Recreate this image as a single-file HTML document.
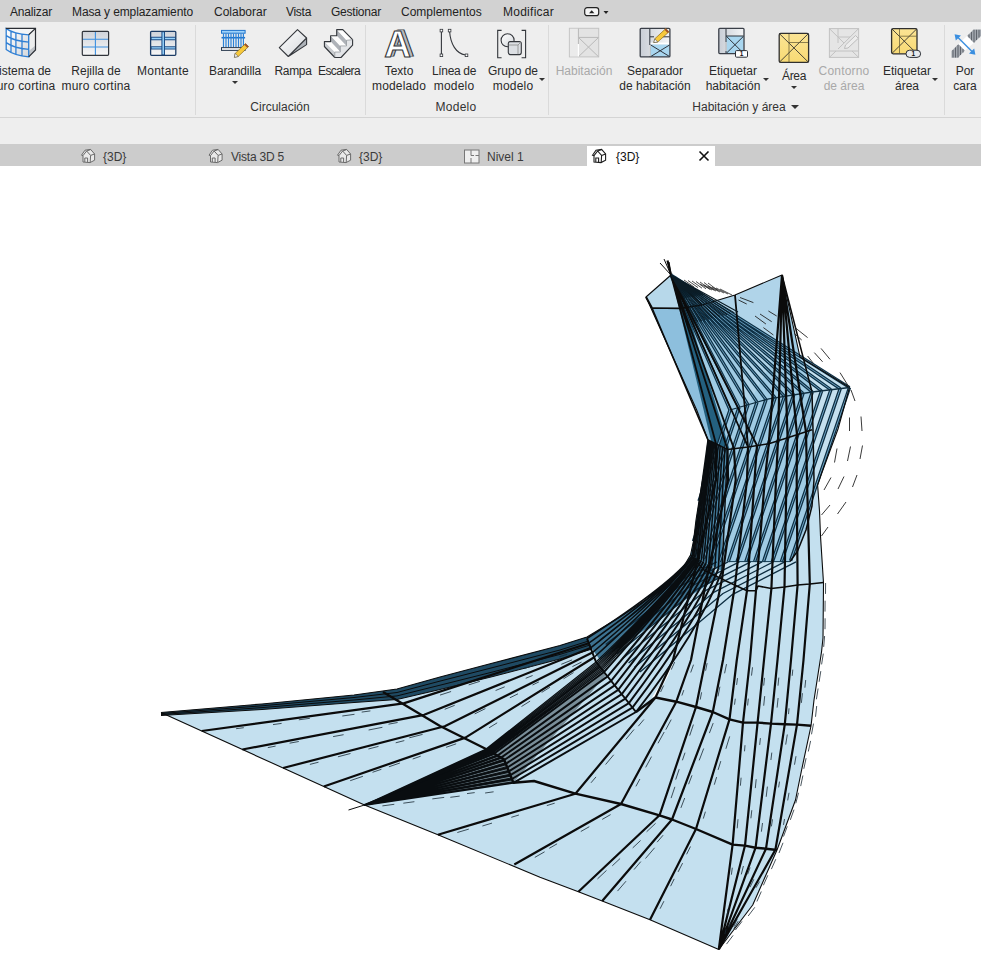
<!DOCTYPE html>
<html lang="es"><head><meta charset="utf-8"><title>Revit</title>
<style>
html,body{margin:0;padding:0;background:#fff;overflow:hidden}
body{width:981px;height:959px;position:relative;font-family:"Liberation Sans",sans-serif;font-size:12px;color:#2b2b2b}
.menubar{position:absolute;left:0;top:0;width:981px;height:22px;background:#d2d2d2}
.menubar>span{position:absolute;top:5px;line-height:15px;white-space:nowrap;color:#222}
.ribbon{position:absolute;left:0;top:22px;width:981px;height:122px;background:#eeeeee}
.rline{position:absolute;left:0;top:117px;width:981px;height:1px;background:#d4d4d4}
.sep{position:absolute;top:25px;width:1px;height:90px;background:#dadada}
.lbl{position:absolute;transform:translateX(-50%);text-align:center;white-space:nowrap;line-height:15px;color:#2a2a2a}
.lbl.dis{color:#a9a9a9}
.ptitle{position:absolute;top:100px;transform:translateX(-50%);white-space:nowrap;line-height:15px;color:#333}
.arr{position:absolute;width:0;height:0;border-left:3px solid transparent;border-right:3px solid transparent;border-top:3px solid #333}
.ico{position:absolute;top:25px;width:36px;height:36px}
.tabbar{position:absolute;left:0;top:144px;width:981px;height:22px;background:#cccccc}
.tab{position:absolute;top:6px;line-height:15px;white-space:nowrap;color:#3a3a3a}
.tabactive{position:absolute;left:587px;top:146px;width:128px;height:20px;background:#fff}
.tico{position:absolute;top:148px;width:16px;height:16px}
.view{position:absolute;left:0;top:166px;width:981px;height:793px;background:#fff}
.model{position:absolute;left:0;top:0}
</style></head><body>
<div class="menubar">
<span style="left:10px"><span style="letter-spacing:-0.17px">Analizar</span></span><span style="left:72px"><span style="letter-spacing:-0.12px">Masa y emplazamiento</span></span><span style="left:214px">Colaborar</span><span style="left:286px"><span style="letter-spacing:-0.29px">Vista</span></span><span style="left:331px"><span style="letter-spacing:-0.23px">Gestionar</span></span><span style="left:401px">Complementos</span><span style="left:503px"><span style="letter-spacing:0.26px">Modificar</span></span>
<svg style="position:absolute;left:584px;top:7px" width="26" height="10" viewBox="0 0 26 10"><rect x="0.7" y="0.7" width="14" height="8" rx="2.5" fill="#f4f4f4" stroke="#222" stroke-width="1.2"/><path d="M5 6.2 L7.7 3.2 L10.4 6.2Z" fill="#222"/><path d="M19.5 4 L24.5 4 L22 7Z" fill="#222"/></svg>
</div>
<div class="ribbon"></div>
<div class="rline"></div>
<div class="sep" style="left:195px"></div><div class="sep" style="left:365px"></div><div class="sep" style="left:548px"></div><div class="sep" style="left:944px"></div>

<div class="lbl" style="left:21px;top:64px">Sistema de<br><span style="letter-spacing:0.19px">muro cortina</span></div>
<div class="lbl" style="left:96px;top:64px">Rejilla de<br><span style="letter-spacing:0.19px">muro cortina</span></div>
<div class="lbl" style="left:163px;top:64px"><span style="letter-spacing:0.24px">Montante</span></div>
<div class="lbl" style="left:235px;top:64px"><span style="letter-spacing:-0.14px">Barandilla</span></div><div class="arr" style="left:232px;top:81px"></div>
<div class="lbl" style="left:293px;top:64px"><span style="letter-spacing:-0.34px">Rampa</span></div>
<div class="lbl" style="left:339px;top:64px"><span style="letter-spacing:-0.59px">Escalera</span></div>
<div class="ptitle" style="left:280px">Circulación</div>
<div class="lbl" style="left:399px;top:64px">Texto<br><span style="letter-spacing:0.16px">modelado</span></div>
<div class="lbl" style="left:454px;top:64px"><span style="letter-spacing:-0.34px">Línea de</span><br><span style="letter-spacing:0.2px">modelo</span></div>
<div class="lbl" style="left:513px;top:64px">Grupo de<br><span style="letter-spacing:0.2px">modelo</span></div><div class="arr" style="left:539px;top:78px"></div>
<div class="ptitle" style="left:456px"><span style="letter-spacing:0.27px">Modelo</span></div>
<div class="lbl dis" style="left:584px;top:64px">Habitación</div>
<div class="lbl" style="left:655px;top:64px">Separador<br>de habitación</div>
<div class="lbl" style="left:733px;top:64px">Etiquetar<br>habitación</div><div class="arr" style="left:763px;top:78px"></div>
<div class="lbl" style="left:794px;top:69px"><span style="letter-spacing:-0.34px">Área</span></div><div class="arr" style="left:791px;top:86px"></div>
<div class="lbl dis" style="left:844px;top:64px"><span style="letter-spacing:0.2px">Contorno</span><br>de área</div>
<div class="lbl" style="left:907px;top:64px">Etiquetar<br>área</div><div class="arr" style="left:932px;top:78px"></div>
<div class="ptitle" style="left:739px">Habitación y área</div><div class="arr" style="left:791px;top:105px;border-left-width:4px;border-right-width:4px;border-top-width:4px"></div>
<div class="lbl" style="left:965px;top:64px">Por<br>cara</div>
<div class="tabbar">
<span class="tab" style="left:103px">{3D}</span><span class="tab" style="left:231px"><span style="letter-spacing:-0.22px">Vista 3D 5</span></span><span class="tab" style="left:359px">{3D}</span><span class="tab" style="left:487px">Nivel 1</span>
</div>
<div class="tabactive"><span class="tab" style="left:29px;top:4px;color:#111">{3D}</span>
<svg style="position:absolute;left:111px;top:4px" width="12" height="12" viewBox="0 0 12 12"><path d="M1.5 1.5 L10.5 10.5 M10.5 1.5 L1.5 10.5" stroke="#111" stroke-width="1.6"/></svg></div>
<svg style="position:absolute;left:0;top:0" width="981" height="166" viewBox="0 0 981 166" fill="none">
<defs>
<linearGradient id="gg" x1="0" y1="0" x2="0" y2="1"><stop offset="0" stop-color="#cfd3d9"/><stop offset="1" stop-color="#f7f7f7"/></linearGradient>
<linearGradient id="gh" x1="0" y1="0" x2="1" y2="0"><stop offset="0" stop-color="#c9ced6"/><stop offset="1" stop-color="#f4f5f6"/></linearGradient>
<linearGradient id="gy" x1="0" y1="0" x2="0" y2="1"><stop offset="0" stop-color="#fbe494"/><stop offset="1" stop-color="#f8da74"/></linearGradient>
<linearGradient id="gw" x1="0" y1="0" x2="1" y2="1"><stop offset="0" stop-color="#ffffff"/><stop offset="1" stop-color="#d5d8dc"/></linearGradient>
</defs>
<!-- 1 sistema de muro cortina -->
<g>
<path d="M6.2 28.6 L35.5 28.4 L28.7 34.8 Q14 34 6.2 28.6Z" fill="#f4f5f6"/>
<path d="M6.2 28.6 Q14 34 28.7 34.8 L28.7 56.8 Q14 55.5 6.2 49.5 Z" fill="url(#gw)"/>
<path d="M28.7 34.8 L35.5 28.5 L35.5 50 L28.7 56.8Z" fill="#eceded"/>
<path d="M28.7 51 L35.5 45.5 L35.5 50 L28.7 56.8Z" fill="#bfc3c8"/>
<path d="M6.2 28.6 Q14 34 28.7 34.8 L28.7 56.8 Q14 55.5 6.2 49.5 Z M11 31.4 L11 52.7 M15.9 32.9 L15.9 54.3 M22 34.1 L22 55.9 M6.2 35.6 Q14 41 28.7 42.1 M6.2 42.6 Q14 48.2 28.7 49.4" stroke="#2f7fd4" stroke-width="1.3"/>
<path d="M5.8 28.4 L35.5 28.4 L35.5 50 L28.7 56.8 M28.7 34.8 L35.5 28.4" stroke="#2a2d33" stroke-width="1.2"/>
</g>
<!-- 2 rejilla -->
<g><rect x="82.3" y="31.3" width="26.3" height="24" rx="1" fill="url(#gg)"/>
<path d="M95.4 31.5V55 M82.5 39.2H108.4 M82.5 47H108.4" stroke="#3b8fe0" stroke-width="1.1"/>
<rect x="82.3" y="31.3" width="26.3" height="24" rx="1" stroke="#30343b" stroke-width="1.2"/></g>
<!-- 3 montante -->
<g><rect x="150.6" y="31.3" width="25.2" height="24" rx="1" fill="url(#gg)"/>
<path d="M151 38.5H175.5 M151 47.9H175.5" stroke="#1d4d86" stroke-width="3.4"/>
<path d="M151.5 38.5H175 M151.5 47.9H175" stroke="#9ad4fb" stroke-width="1.3"/>
<path d="M163.2 31.6V55" stroke="#1d4d86" stroke-width="3.6"/><path d="M163.2 32.3V54.4" stroke="#9ad4fb" stroke-width="1.5"/>
<rect x="150.6" y="31.3" width="25.2" height="24" rx="1" stroke="#1c3c66" stroke-width="1.3"/></g>
<!-- 4 barandilla -->
<g><rect x="221.5" y="30.4" width="23.6" height="2.8" fill="#9fd3fa" stroke="#1f74cc" stroke-width="1"/>
<path d="M221.5 37.7H245.1" stroke="#1f74cc" stroke-width="1.6"/>
<path d="M223.5 33.5V47.5 M226 33.5V47.5 M228.5 33.5V47.5 M231 33.5V47.5 M233.5 33.5V47.5 M236 33.5V47.5 M238.5 33.5V47.5 M241 33.5V47.5 M243.4 33.5V47.5" stroke="#2a82d8" stroke-width="1.2"/>
<rect x="221.5" y="47.6" width="23.6" height="2.8" fill="#f0f0f0" stroke="#2b3a4e" stroke-width="1"/>
<path d="M234.4 57.3 L235.2 53.4 L245.5 43.6 L248.6 46.6 L238.2 56.5Z" fill="#f7c93c" stroke="#8a6a1a" stroke-width="0.7"/>
<path d="M244.2 44.8 L245.5 43.6 L248.6 46.6 L247.3 47.8Z" fill="#a0522d"/>
<path d="M234.4 57.3 L235.2 53.4 L238.2 56.5Z" fill="#fff" stroke="#555" stroke-width="0.6"/></g>
<!-- 5 rampa -->
<g><path d="M279.3 47.7 L297.5 29.7 L306.6 38 L288.3 56.5Z" fill="url(#gw)"/>
<path d="M288.3 56.5 L306.6 38 L306.6 44.6Z" fill="#aeb3b9"/>
<path d="M279.3 47.7 L297.5 29.7 L306.6 38 L306.6 44.6 L288.3 56.5Z M288.3 56.5 L306.6 38" stroke="#33363b" stroke-width="1.1" stroke-linejoin="round"/></g>
<!-- 6 escalera -->
<g stroke-linejoin="round"><path d="M334.8 52 L340.3 52 L340.3 45.9 L346.5 45.9 L346.5 40.3 L352.6 39.7 L352.6 45.2 L341 57.5 L334.8 57.5Z" fill="#e3e5e8"/>
<path d="M324.4 41.6 L334.8 52 L334.8 57.5 L324.4 46.5Z" fill="#c9ccd0"/>
<path d="M336.7 29.6 L336.7 35.7 L346.5 45.9 L346.5 40.3Z M330.6 35.7 L330.6 41.6 L340.3 52 L340.3 45.9Z" fill="#aeb2b8"/>
<path d="M336.7 29.6 L342.8 29.6 L352.6 39.7 L346.5 40.3Z M330.6 35.7 L336.7 35.7 L346.5 45.9 L340.3 45.9Z M324.4 41.6 L330.6 41.6 L340.3 52 L334.8 52Z" fill="#fdfdfd"/>
<path d="M324.4 41.6 L330.6 41.6 L330.6 35.7 L336.7 35.7 L336.7 29.6 L342.8 29.6 L352.6 39.7 L352.6 45.2 L341 57.5 L334.8 57.5 L324.4 46.5Z" stroke="#33363b" stroke-width="1.1" fill="none"/>
<path d="M334.8 52 V57.5 M334.8 52 H340.3 V45.9 H346.5 V40.3 L352.6 39.7" stroke="#8b9096" stroke-width="0.7" fill="none"/></g>
<!-- 7 texto modelado -->
<g font-family="Liberation Sans, sans-serif" font-weight="bold" font-size="37" text-anchor="middle" opacity="0.999">
<text x="400.8" y="55.8" fill="#b4b8be" stroke="#33363b" stroke-width="1.1">A</text>
<text x="399.6" y="56.2" fill="#b4b8be" stroke="#b4b8be" stroke-width="0.6">A</text>
<text x="397.6" y="56.8" fill="#ffffff" stroke="#33363b" stroke-width="1.1">A</text></g>
<!-- 8 linea de modelo -->
<g stroke="#33363b"><path d="M441.4 31.5V54.2" stroke-width="1.1"/><path d="M449.6 31.5 C450.5 44 456 53.5 465.5 55" stroke-width="1.1"/>
<rect x="440.1" y="29.3" width="2.6" height="2.6" fill="#fff" stroke-width="0.8"/><rect x="440.1" y="54" width="2.6" height="2.6" fill="#fff" stroke-width="0.8"/>
<rect x="448.3" y="29.3" width="2.6" height="2.6" fill="#fff" stroke-width="0.8"/><rect x="465.2" y="54" width="2.6" height="2.6" fill="#fff" stroke-width="0.8"/></g>
<!-- 9 grupo de modelo -->
<g stroke="#33363b" stroke-width="1.1"><path d="M501.6 30.4H497.7V57.8H501.6 M521.6 30.4H525.6V57.8H521.6"/>
<circle cx="507.6" cy="40.3" r="6.5" fill="url(#gw)"/>
<rect x="508.3" y="41.6" width="13" height="13" rx="2" fill="#dcdfe3"/><path d="M508.8 45 H518 V54.2 M518 45 L521 42" stroke-width="0.8" stroke="#888"/></g>
<!-- 10 habitacion (disabled) -->
<g stroke="#c4c4c4" stroke-width="1"><rect x="569.4" y="28.3" width="29.3" height="28.6" fill="#e3e3e3"/><rect x="569.9" y="28.8" width="8" height="27.6" fill="#ebebeb" stroke="none"/>
<path d="M578.4 28.5V44 M578.4 37.4H598.5 M578.6 37.6 L598.4 56.6 M598.4 37.6 L578.6 56.6" stroke="#b9b9b9"/><path d="M578.4 44V56.6" stroke="#fff" stroke-width="1.2"/></g>
<!-- 11 separador de habitacion -->
<g><rect x="640.2" y="28.3" width="29.7" height="28.6" rx="1" fill="url(#gh)"/>
<rect x="650.6" y="44.5" width="19" height="12.2" fill="#a9d6ef"/>
<path d="M649.8 28.6V56.6" stroke="#3a3f48" stroke-width="1.1"/><path d="M649.8 45V56" stroke="#fff" stroke-width="1.1"/>
<path d="M650 36.8H654 M662 36.8H669.6 M650.8 45 L669.5 56.5 M669.5 45 L650.8 56.5" stroke="#2f343c" stroke-width="1"/>
<path d="M650.6 43.4H669.6" stroke="#fff" stroke-width="1.6"/>
<rect x="640.2" y="28.3" width="29.7" height="28.6" rx="1" stroke="#3a3f48" stroke-width="1.3"/>
<path d="M653.8 42.6 L654.8 38.8 L665.8 28.6 L669 31.8 L657.7 42Z" fill="#f7c93c" stroke="#8a6a1a" stroke-width="0.7"/>
<path d="M664.5 29.8 L665.8 28.6 L669 31.8 L667.7 33Z" fill="#a0522d"/>
<path d="M653.8 42.6 L654.8 38.8 L657.7 42Z" fill="#fff" stroke="#555" stroke-width="0.6"/></g>
<!-- 12 etiquetar habitacion -->
<g><rect x="718.8" y="28.3" width="25.2" height="25.3" rx="1" fill="url(#gh)"/>
<rect x="726.2" y="36" width="17.4" height="17.2" fill="#a9d6ef"/>
<path d="M726 28.6V53.3 M726 36H743.7 M726.4 36.3 L743.5 53.2 M743.5 36.3 L726.4 53.2" stroke="#2f343c" stroke-width="1"/><path d="M726 42V51" stroke="#fff" stroke-width="1.1"/>
<rect x="718.8" y="28.3" width="25.2" height="25.3" rx="1" stroke="#3a3f48" stroke-width="1.3"/>
<rect x="735.5" y="50.6" width="12" height="6.6" rx="1" fill="#fff" stroke="#2b2f36" stroke-width="1"/>
<text x="741.5" y="56.3" font-family="Liberation Sans, sans-serif" font-size="6.5" font-weight="bold" fill="#111" text-anchor="middle">1</text></g>
<!-- 13 area -->
<g><rect x="779.2" y="33.4" width="29.4" height="29" rx="1.5" fill="url(#gy)" stroke="#2f2f2f" stroke-width="1.3"/>
<path d="M779.6 33.8 L808.2 62 M808.2 33.8 L779.6 62" stroke="#2a2a2a" stroke-width="0.85"/>
<path d="M789 34V62 M789 42.5H808" stroke="#5c5430" stroke-width="0.7"/></g>
<!-- 14 contorno de area (disabled) -->
<g stroke="#c2c2c2" stroke-width="1"><rect x="829.4" y="28.6" width="29.2" height="28.8" fill="#e5e5e5"/>
<path d="M829.6 28.8 L844 43 M858.4 28.8 L838 49 M829.6 57.2 L836 51 M858.4 57.2 L852 51 M829.6 51H858.4 M838 28.8V43 M838 37H850" />
<path d="M844.5 48.5 L845.5 45 L855.5 35.5 L858.3 38.3 L848 48Z" fill="#ececec" stroke="#bdbdbd"/></g>
<!-- 15 etiquetar area -->
<g><rect x="891.6" y="28.6" width="25.4" height="25.2" rx="1.5" fill="url(#gy)" stroke="#2f2f2f" stroke-width="1.3"/>
<path d="M892 29 L916.6 53.4 M916.6 29 L892 53.4" stroke="#2a2a2a" stroke-width="0.85"/>
<path d="M899.5 29V53.5 M899.5 36.2H916.6" stroke="#5c5430" stroke-width="0.7"/>
<rect x="906" y="50.2" width="14.6" height="7.2" rx="3.6" fill="#e8eaee" stroke="#2b2f36" stroke-width="1"/>
<text x="913.3" y="56.2" font-family="Liberation Sans, sans-serif" font-size="6.5" font-weight="bold" fill="#111" text-anchor="middle">1</text></g>
<!-- 16 por cara -->
<g><path d="M951.5 51 L958.5 44 L965 50.5 L958 57.8 L951.5 57.8Z" fill="#a2a7ae"/><path d="M967 36 L973.5 29.5 L981 29.5 L981 36 L973.8 43Z" fill="#a2a7ae"/>
<path d="M953 50V57.5 M955.5 47.5V57.5 M958 45V57.5 M960.5 46.5V55 M963 49V52.5 M969 34.5V38 M971.5 32V40.5 M974 29.8V42.5 M976.5 29.8V40 M979 29.8V37.5" stroke="#5f646c" stroke-width="1"/>
<path d="M958.5 44 L967 36 L973.8 43 L965 50.5Z" fill="#fff"/>
<path d="M956.5 36 L973.5 53" stroke="#3b8fe0" stroke-width="1.4"/>
<path d="M954.6 34.2 L961 35.4 L955.8 40.6Z M975.4 54.8 L969 53.6 L974.2 48.4Z" fill="#3b8fe0"/></g>
<!-- tab icons -->
<g id="h3d" stroke="#6a6a6a" stroke-width="1" fill="#e9e9e9"><path d="M81.5 155.2 L85 150.2 L90.6 149.4 L94.6 154 L94.6 160.2 L90 162.6 L83 162 L83 155.6Z"/><path d="M83 155.6 L86.6 151 L90.6 155.4 L90.2 162.4 M86.6 151 L90.6 149.6 M90.6 155.4 L94.6 154 M84.8 162 V158 H87.6 V162.2" fill="none"/></g>
<use href="#h3d" x="127.5"/><use href="#h3d" x="256"/>
<g stroke="#1d1d1d" stroke-width="1.1" fill="#fff"><path d="M592.5 155.2 L596 150.2 L601.6 149.4 L605.6 154 L605.6 160.2 L601 162.6 L594 162 L594 155.6Z"/><path d="M594 155.6 L597.6 151 L601.6 155.4 L601.2 162.4 M597.6 151 L601.6 149.6 M601.6 155.4 L605.6 154 M595.8 162 V158 H598.6 V162.2" fill="none"/></g>
<g stroke="#777" stroke-width="1" fill="#efefef"><rect x="464.5" y="150" width="14.5" height="13"/><path d="M471 150.2V155.5H474 M471 158V163 M475.5 155.5H479" fill="none"/></g>
</svg>

<div class="view">
<svg class="model" width="981" height="793" viewBox="0 166 981 793" stroke-linecap="butt" stroke-linejoin="round" fill="none">
<polygon points="161.0,712.5 262.0,704.0 354.0,695.0 397.0,689.0 440.0,677.0 493.0,663.0 560.0,645.5 587.0,637.0 620.0,617.0 650.0,597.0 672.6,580.5 684.0,566.0 690.5,555.0 693.5,541.0 696.0,520.0 700.0,495.0 706.0,460.0 708.0,440.0 696.7,410.0 646.0,297.0 671.0,275.0 702.0,305.0 735.0,295.0 782.0,275.0 800.0,357.0 849.5,387.5 838.0,429.0 821.4,474.0 817.6,485.0 819.5,511.0 820.5,536.0 823.5,583.0 823.0,638.0 821.5,652.0 814.0,700.0 811.0,726.0 801.6,770.0 795.5,800.0 777.0,850.0 752.7,905.0 718.8,949.5 650.0,919.8 602.2,901.0 578.4,891.7 540.0,877.2 437.9,834.8 364.5,805.0 161.0,712.5" fill="#c4e0ef"/>
<polygon points="646.0,297.0 671.0,275.0 702.0,305.0 735.0,295.0 782.0,275.0 800.0,357.0 812.0,392.0 813.0,430.0 814.0,480.0 812.0,506.0 806.0,530.0 797.6,551.0 790.0,561.6 728.0,561.6 712.0,566.0 690.5,555.0 693.5,541.0 696.0,520.0 700.0,495.0 706.0,460.0 708.0,440.0 696.7,410.0" fill="#9fcbe4"/>
<polygon points="646.0,297.0 671.0,275.0 680.0,308.4 652.0,308.0" fill="#b7d8ea"/>
<polygon points="652.0,308.0 680.0,308.4 712.3,446.0 708.0,440.0 696.7,410.0 646.0,297.0" fill="#8dbfdd"/>
<polygon points="671.0,275.0 677.0,277.0 729.5,449.0 712.3,446.0" fill="#24607f"/>
<polygon points="702.0,305.0 735.0,295.0 782.0,275.0 790.0,330.0 745.0,410.0 735.0,330.0" fill="#b4d6ea" fill-opacity="0.80"/>
<polygon points="708.0,440.0 727.5,449.4 724.0,500.0 722.0,545.0 722.0,571.0 690.5,555.0 693.5,541.0 696.0,520.0 700.0,495.0 706.0,460.0" fill="#3f7fa3" fill-opacity="0.90"/>
<polygon points="560.0,645.5 587.0,637.0 620.0,617.0 650.0,597.0 672.6,580.5 684.0,566.0 690.5,555.0 712.0,566.0 718.0,578.0 690.0,596.0 662.0,618.0 630.0,640.0 600.0,660.0 590.0,646.0" fill="#2f6685" fill-opacity="0.90"/>
<polygon points="161.0,712.5 262.0,704.0 354.0,695.0 397.0,689.0 440.0,677.0 493.0,663.0 560.0,645.5 587.0,637.0 592.0,649.0 560.0,659.0 493.0,676.5 440.0,689.5 397.0,699.5 354.0,702.5 262.0,709.5 161.0,715.5" fill="#1f4a63"/>
<polygon points="364.5,805.0 486.0,749.0 596.0,662.0 606.0,675.0 513.4,782.8" fill="#3d4a52" fill-opacity="0.55"/>
<polygon points="652.0,697.5 663.0,680.0 677.0,653.5 668.0,676.0 657.0,696.0" fill="#ffffff"/>
<path d="M671.0,275.0 L730.0,410.0 M671.0,275.0 L739.0,407.4 M671.0,275.0 L748.0,404.8 M671.0,275.0 L757.0,402.2 M671.0,275.0 L766.0,399.6 M671.0,275.0 L775.2,397.8 M671.0,275.0 L784.5,396.3 M671.0,275.0 L793.7,394.9 M671.0,275.0 L803.0,393.4 M671.0,275.0 L812.3,392.0 M671.0,275.0 L821.6,390.9 M671.0,275.0 L830.9,389.7 M671.0,275.0 L840.2,388.6 M671.0,275.0 L849.5,387.5" stroke="#0e3045" stroke-width="3.2"/>
<path d="M681.6,299.3 L730.0,410.0 M683.2,298.8 L739.0,407.4 M684.9,298.4 L748.0,404.8 M686.5,297.9 L757.0,402.2 M688.1,297.4 L766.0,399.6 M689.8,297.1 L775.2,397.8 M691.4,296.8 L784.5,396.3 M693.1,296.6 L793.7,394.9 M694.8,296.3 L803.0,393.4 M696.4,296.1 L812.3,392.0 M698.1,295.9 L821.6,390.9 M699.8,295.7 L830.9,389.7 M701.5,295.5 L840.2,388.6 M703.1,295.2 L849.5,387.5" stroke="#6fa6c6" stroke-width="0.9"/>
<path d="M730.0,410.0 L699.0,501.1 M739.0,407.4 L693.5,541.3 M748.0,404.8 L696.3,557.0 M757.0,402.2 L703.8,558.8 M766.0,399.6 L711.3,560.5 M775.2,397.8 L719.5,561.8 M784.5,396.3 L728.2,561.8 M793.7,394.9 L737.0,561.7 M803.0,393.4 L745.8,561.7 M812.3,392.0 L754.6,561.7 M821.6,390.9 L763.5,561.7 M830.9,389.7 L772.4,561.6 M840.2,388.6 L781.4,561.6 M849.5,387.5 L790.6,560.8" stroke="#0d2d41" stroke-width="3.4"/>
<path d="M730.0,410.0 L699.0,501.1 M739.0,407.4 L693.5,541.3 M748.0,404.8 L696.3,557.0 M757.0,402.2 L703.8,558.8 M766.0,399.6 L711.3,560.5 M775.2,397.8 L719.5,561.8 M784.5,396.3 L728.2,561.8 M793.7,394.9 L737.0,561.7 M803.0,393.4 L745.8,561.7 M812.3,392.0 L754.6,561.7 M821.6,390.9 L763.5,561.7 M830.9,389.7 L772.4,561.6 M840.2,388.6 L781.4,561.6 M849.5,387.5 L790.6,560.8" stroke="#6fa6c7" stroke-width="1.0"/>
<path d="M716.8,561.8 L670.2,585.3 L600.0,640.0 M728.1,561.8 L679.0,586.6 L605.7,644.6 M739.4,561.8 L687.8,588.0 L611.4,649.1 M750.7,561.8 L696.6,589.4 L617.1,653.7 M762.1,561.8 L705.4,590.7 L622.9,658.3 M773.4,561.8 L714.2,592.1 L628.6,662.9 M784.7,561.8 L723.0,593.5 L634.3,667.4 M796.0,561.8 L731.8,594.9 L640.0,672.0" stroke="#0d2d41" stroke-width="1.3"/>
<path d="M161.0,712.5 L262.0,704.0 L354.0,695.0 L397.0,689.0 L440.0,677.0 L493.0,663.0 L560.0,645.5 L587.0,637.0 L620.0,617.0 L650.0,597.0 L672.6,580.5 L684.0,566.0 L690.5,555.0 L693.5,541.0 L696.0,520.0 L700.0,495.0 L706.0,460.0 L708.0,440.0 L696.7,410.0 L646.0,297.0 L671.0,275.0 L702.0,305.0 L735.0,295.0 L782.0,275.0 L800.0,357.0 L849.5,387.5 L838.0,429.0 L821.4,474.0 L817.6,485.0 L819.5,511.0 L820.5,536.0 L823.5,583.0 L823.0,638.0 L821.5,652.0 L814.0,700.0 L811.0,726.0 L801.6,770.0 L795.5,800.0 L777.0,850.0 L752.7,905.0 L718.8,949.5 L650.0,919.8 L602.2,901.0 L578.4,891.7 L540.0,877.2 L437.9,834.8 L364.5,805.0 L161.0,712.5 L161.0,712.5" stroke="#0b0b0b" stroke-width="1.1"/>
<path d="M383.0,692.0 L440.0,726.0 L486.0,749.0 L504.0,759.3 L513.4,782.8 L534.0,781.0 L575.4,793.7 L621.0,804.0 L659.5,815.3 L672.0,819.5 L696.0,829.0 L732.6,844.6 L745.0,845.6 L755.6,847.7 L766.0,848.7 L777.0,850.0 M636.0,712.0 L655.5,697.5 L676.3,701.7 L696.0,707.0 L712.8,712.0 L729.5,719.4 L743.0,722.6 L757.6,722.6 L771.0,723.6 L784.8,724.2 L797.0,724.6 L811.0,725.7" stroke="#0b0b0b" stroke-width="2.4"/>
<path d="M587.0,638.5 L596.0,662.0 L636.0,712.0 M646.0,297.0 L652.0,308.0" stroke="#0b0b0b" stroke-width="2.0"/>
<path d="M690.5,555.0 L704.0,570.0 L726.0,581.0 L747.0,590.7 L756.0,590.7 L758.0,586.0 L771.4,588.5 L784.5,587.0 L797.6,585.0 L809.8,584.0 L823.5,582.5 M652.0,308.0 L680.0,308.4 L702.0,305.0 M652.0,308.0 L708.0,440.0" stroke="#0b0b0b" stroke-width="1.6"/>
<path d="M728.0,561.6 L790.0,561.6" stroke="#123a50" stroke-width="1.0"/>
<path d="M708.0,440.0 L727.5,449.4 L748.0,447.0 L768.8,443.8 L790.0,437.0 L812.0,429.7 M782.0,275.0 L812.0,392.0 L813.0,430.0 L814.0,480.0 L812.0,506.0 L806.0,530.0 L797.6,551.0 L790.0,561.6" stroke="#0b0b0b" stroke-width="1.5"/>
<path d="M730.0,410.0 L768.8,398.8 L812.0,392.0 L849.5,387.5" stroke="#0d2c3e" stroke-width="1.3"/>
<path d="M735.0,295.0 L745.0,410.0 L748.0,447.0 M716.0,444.0 L671.0,275.0 M727.5,449.4 L671.0,275.0 M734.0,448.6 L671.0,275.0 M748.0,447.0 L671.0,275.0 M757.0,445.5 L671.0,275.0" stroke="#0b0b0b" stroke-width="1.8"/>
<path d="M660.0,263.0 L671.0,275.0 M664.0,259.0 L671.0,275.0 M364.5,805.0 L348.5,810.0 M161.0,713.5 L262.0,705.8 L354.0,697.5 L397.0,692.5 L440.0,681.1 L493.0,667.5 L560.0,650.0 L588.6,641.0 M161.0,714.5 L262.0,707.6 L354.0,700.0 L397.0,695.9 L440.0,685.2 L493.0,671.9 L560.0,654.4 L590.3,644.9 M161.0,715.5 L262.0,709.5 L354.0,702.5 L397.0,699.5 L440.0,689.5 L493.0,676.5 L560.0,659.0 L592.0,649.0" stroke="#0b0b0b" stroke-width="1.0"/>
<path d="M667.5,260.5 L671.0,275.0 M201.7,731.0 L403.6,703.4 L588.8,643.2 M242.4,749.5 L424.2,714.8 L590.6,647.9 M283.1,768.0 L444.8,726.2 L592.4,652.6 M323.8,786.5 L465.4,737.6 L594.2,657.3 M437.9,834.8 L575.4,793.7 L655.5,697.5 L673.0,660.0 L697.0,563.0 L716.0,480.0 L716.0,444.0 M514.3,864.5 L621.0,804.0 L676.3,701.7 L691.0,660.0 L708.0,572.0 L728.0,480.0 L727.5,449.4 M578.4,891.7 L659.5,815.3 L696.0,707.0 L705.5,660.0 L722.0,579.0 L735.7,480.0 L734.0,448.6 M602.2,901.0 L672.0,819.5 L712.8,712.0 L723.0,660.0 L735.0,585.0 L747.0,480.0 L748.0,447.0 M650.0,919.8 L696.0,829.0 L729.5,719.4 L736.8,660.0 L747.0,590.7 L754.5,480.0 L757.0,445.5 M718.8,949.5 L732.6,844.6 L743.0,722.6 L750.0,660.0 L756.0,590.7 L764.8,480.0 L768.8,443.8 L782.0,275.0 M718.8,949.5 L745.0,845.6 L757.6,722.6 L764.0,660.0 L771.4,588.5 L776.0,480.0 L778.0,441.0 L782.0,275.0 M718.8,949.5 L755.6,847.7 L771.0,723.6 L777.5,660.0 L784.5,587.0 L786.4,480.0 L787.6,438.0 L782.0,275.0 M718.8,949.5 L766.0,848.7 L784.8,724.2 L791.0,660.0 L797.6,585.0 L796.7,480.0 L797.0,435.0 L782.0,275.0 M718.8,949.5 L775.4,849.8 L797.0,724.6 L803.5,660.0 L809.8,584.0 L807.0,480.0 L806.0,432.0 L782.0,275.0" stroke="#0b0b0b" stroke-width="2.2"/>
<path d="M669.0,262.0 L671.0,275.0" stroke="#0b0b0b" stroke-width="1.2"/>
<path d="M697.5,558.7 L711.0,441.4 M699.2,559.6 L712.0,441.9 M701.3,560.6 L713.3,442.5 M703.5,561.7 L714.7,443.2 M706.0,563.0 L716.3,444.0 M708.7,564.4 L718.2,444.9 M711.7,565.8 L720.2,445.9 M714.9,567.4 L722.4,447.0 M718.3,569.2 L724.9,448.1 M722.0,571.0 L727.5,449.4 M692.0,556.0 L708.0,440.0 M692.1,556.0 L708.0,440.0 M692.4,556.2 L708.2,440.1 M692.9,556.4 L708.4,440.2 M693.6,556.8 L708.7,440.3" stroke="#090d10" stroke-width="1.5"/>
<path d="M694.4,557.2 L709.2,440.6 M695.6,557.8 L709.8,440.9 M696.9,558.5 L710.6,441.3" stroke="#090d10" stroke-width="1.1"/>
<path d="M364.5,805.0 L494.9,754.1 M364.5,805.0 L496.7,755.1 M364.5,805.0 L498.4,756.1 M364.5,805.0 L500.2,757.1 M364.5,805.0 L502.0,758.1 M364.5,805.0 L503.8,759.2 M364.5,805.0 L504.7,760.9 M364.5,805.0 L505.4,762.8 M364.5,805.0 L506.2,764.7 M364.5,805.0 L506.9,766.6 M364.5,805.0 L507.7,768.5 M364.5,805.0 L508.5,770.4 M364.5,805.0 L509.2,772.3 M364.5,805.0 L510.0,774.2 M364.5,805.0 L510.7,776.1 M364.5,805.0 L511.5,778.0 M364.5,805.0 L512.3,779.9 M364.5,805.0 L513.0,781.8" stroke="#090d10" stroke-width="0.9"/>
<path d="M671.0,275.0 L698.0,322.0 M671.0,275.0 L701.6,321.1 M671.0,275.0 L705.3,320.2 M671.0,275.0 L708.9,319.3 M671.0,275.0 L712.5,318.4 M671.0,275.0 L716.2,317.5 M671.0,275.0 L719.8,316.5 M671.0,275.0 L723.5,315.6 M671.0,275.0 L727.1,314.7 M671.0,275.0 L730.7,313.8 M671.0,275.0 L734.4,312.9 M671.0,275.0 L738.0,312.0" stroke="#0b1c26" stroke-width="1.1"/>
<path d="M849.5,417.5 L849.5,431.0 M861.0,416.5 L862.0,431.0 M837.0,448.5 L834.5,462.5 M850.5,446.5 L847.5,461.0 M862.5,445.5 L860.0,459.0 M831.0,477.5 L824.0,490.0 M844.0,476.5 L838.0,489.0 M857.0,475.0 L852.5,487.0 M830.0,505.0 L821.5,515.0 M846.0,502.0 L837.5,514.0 M828.0,527.0 L821.5,536.0 M795.0,327.6 L807.6,337.6 M794.2,333.4 L801.7,340.0 M821.0,348.4 L830.0,359.3 M814.3,352.6 L822.6,361.8 M807.6,356.0 L813.4,363.4 M840.0,372.6 L849.3,387.6 M851.0,390.0 L855.0,401.0 M740.0,297.5 L753.4,302.6 M738.5,300.0 L746.7,304.0 M760.0,314.0 L771.7,321.7 M768.4,311.0 L776.7,316.0 M755.0,316.0 L765.9,324.0 M763.4,327.6 L773.4,335.0" stroke="#222" stroke-width="0.9"/>
<path d="M684.0,280.0 L694.0,287.0 M688.0,280.5 L698.0,287.6 M692.0,281.0 L702.0,288.2 M696.0,281.5 L706.0,288.8 M700.0,282.0 L710.0,289.4 M704.0,282.5 L714.0,290.0 M708.0,283.0 L718.0,290.6 M700.0,284.0 L712.0,290.0 M704.0,285.0 L716.0,291.0 M708.0,286.0 L720.0,292.0 M712.0,287.0 L724.0,293.0 M716.0,288.0 L728.0,294.0 M720.0,289.0 L732.0,295.0" stroke="#222" stroke-width="0.8"/>
<path d="M457.3,832.5 L468.8,829.1 M482.4,826.0 L492.0,823.1 M511.3,817.3 L518.9,815.0 M546.8,805.6 L554.7,803.2 M591.0,782.8 L596.0,776.9 M605.6,764.5 L613.7,754.8 M625.8,739.4 L634.0,729.5 M638.3,726.2 L643.9,719.5 M660.6,692.0 L663.6,685.6 M671.2,669.7 L674.7,662.1 M534.8,857.4 L544.6,851.8 M549.3,848.3 L557.1,843.8 M580.8,831.5 L589.3,826.7 M602.2,819.4 L610.6,814.6 M635.9,786.4 L639.9,779.0 M645.7,767.4 L651.5,756.6 M658.0,743.3 L664.2,732.0 M665.8,729.7 L671.2,719.6 M681.9,695.5 L683.8,690.1 M690.7,672.5 L693.5,664.7 M597.5,878.9 L606.5,870.4 M612.3,865.8 L620.1,858.5 M632.7,847.9 L640.6,840.5 M646.6,831.8 L655.6,823.3 M671.1,798.1 L674.9,786.8 M675.7,779.6 L679.2,769.2 M682.4,760.3 L685.0,752.7 M689.7,735.6 L693.4,724.6 M700.2,699.6 L701.6,692.3 M705.6,670.7 L707.1,663.1 M617.5,891.1 L626.0,881.2 M634.0,869.6 L640.8,861.6 M645.5,858.5 L654.6,847.8 M657.1,842.2 L663.1,835.2 M680.9,807.9 L684.7,798.0 M688.6,784.2 L692.0,775.3 M699.2,760.4 L703.7,748.5 M709.4,733.1 L713.2,723.1 M718.0,696.4 L719.9,686.7 M724.6,673.3 L726.5,664.1 M660.1,908.7 L663.9,901.2 M670.6,886.2 L674.2,878.9 M678.1,871.9 L682.6,863.1 M686.6,854.3 L690.5,846.5 M703.3,818.6 L705.4,811.7 M714.3,784.7 L716.6,777.1 M718.1,769.9 L720.8,761.1 M725.9,748.8 L729.7,736.4 M734.5,704.7 L735.3,698.7 M736.6,684.9 L737.5,678.1 M236.1,728.7 L243.8,727.7 M273.0,724.6 L281.6,723.4 M298.8,719.8 L309.9,718.3 M342.3,716.0 L354.5,714.3 M361.7,712.1 L370.4,710.9 M440.0,695.1 L451.1,691.5 M468.7,684.9 L479.9,681.3 M524.0,668.6 L535.2,665.0 M559.3,656.8 L567.3,654.2 M267.8,747.6 L275.6,746.1 M289.6,743.2 L298.8,741.5 M333.1,736.6 L343.6,734.7 M368.6,730.0 L382.4,727.3 M388.5,724.2 L397.6,722.5 M444.7,709.3 L454.7,705.3 M495.6,690.5 L504.7,686.8 M525.7,678.3 L532.6,675.5 M561.3,664.3 L572.1,659.9 M309.9,764.4 L318.5,762.2 M337.9,756.8 L350.5,753.5 M368.4,749.0 L378.5,746.4 M395.7,742.8 L404.3,740.6 M409.3,737.8 L422.6,734.4 M474.7,713.9 L485.4,708.6 M509.9,697.8 L518.0,693.8 M532.5,685.0 L538.9,681.9 M572.4,666.6 L581.5,662.1 M350.2,780.7 L362.9,776.3 M372.5,772.3 L381.4,769.3 M388.9,766.8 L399.9,763.0 M412.7,759.0 L420.7,756.2 M446.1,747.3 L456.2,743.8 M489.1,727.8 L497.2,722.8 M521.5,706.5 L530.1,701.1 M541.7,692.4 L549.9,687.3 M563.5,678.8 L573.5,672.6 M737.2,828.3 L738.0,819.2 M740.4,785.7 L741.1,777.7 M744.5,751.3 L745.0,745.2 M747.6,705.5 L748.3,698.6 M751.5,675.6 L752.5,667.3 M727.1,915.5 L728.0,908.8 M731.4,874.7 L732.3,867.7 M750.9,818.3 L751.8,810.2 M755.3,788.1 L756.2,779.2 M759.7,744.9 L760.4,738.1 M763.7,705.7 L764.7,696.1 M763.7,685.6 L764.5,677.9 M724.9,934.1 L726.1,929.0 M741.3,874.4 L743.4,866.0 M761.4,831.7 L762.5,823.0 M766.2,796.8 L767.4,786.6 M770.9,760.0 L771.8,752.6 M777.1,707.6 L778.1,698.0 M778.0,685.7 L778.8,677.6 M728.8,927.6 L730.9,921.8 M747.6,874.3 L750.1,867.5 M771.4,826.4 L772.5,819.3 M778.6,787.4 L779.5,781.6 M785.7,744.6 L787.3,734.5 M788.5,714.1 L789.0,708.3 M792.2,675.8 L792.8,669.6 M733.7,926.6 L737.2,919.1 M750.0,887.2 L753.8,879.3 M783.5,824.9 L784.5,819.0 M787.7,800.4 L789.0,792.8 M794.5,764.7 L796.0,756.2 M801.4,702.9 L802.4,693.2 M804.9,687.7 L805.7,680.0 M733.8,928.8 L738.2,921.2 M755.9,887.8 L759.5,881.6 M825.6,583.0 L825.5,593.9 M825.1,600.7 L825.0,611.6 M825.1,618.3 L825.0,629.2 M824.6,636.0 L823.7,646.9 M823.3,653.6 L821.6,664.4 M820.8,671.1 L819.1,681.8 M818.1,688.5 L816.4,699.3 M816.7,706.0 L815.5,716.8 M813.5,723.6 L811.5,734.3 M810.6,740.9 L808.3,751.5 M806.1,758.2 L803.8,768.8 M802.9,775.5 L800.7,786.1 M798.5,792.8 L795.8,803.3 M794.0,809.7 L790.3,819.9 M787.3,826.3 L783.5,836.5 M783.0,842.8 L779.0,853.0 M775.8,859.2 L771.4,869.1 M767.8,875.3 L763.4,885.3 M761.3,891.5 L756.9,901.5 M754.8,907.3 L748.2,916.0 M742.0,921.4 L735.4,930.0 M733.1,935.4 L726.5,944.1 M382.4,805.9 L394.3,804.3 M403.3,803.2 L414.4,801.7 M432.3,798.9 L444.2,797.4 M450.3,797.3 L459.7,796.1 M467.0,793.6 L474.7,792.6 M485.1,793.0 L493.6,791.8" stroke="#1a2a33" stroke-width="0.8"/>
<path d="M364.5,805.0 L494.0,753.6 L604.0,672.0 Q677.5,589.6 697.5,558.7 M364.5,805.0 L497.5,755.6 L607.6,676.4 Q678.9,592.3 699.2,559.6 M364.5,805.0 L501.1,757.6 L611.1,680.9 Q680.6,595.5 701.3,560.6 M364.5,805.0 L504.3,760.0 L614.7,685.3 Q682.4,599.1 703.5,561.7 M364.5,805.0 L505.8,763.8 L618.2,689.8 Q684.6,603.2 706.0,563.0 M364.5,805.0 L507.3,767.6 L621.8,694.2 Q687.0,607.8 708.7,564.4 M364.5,805.0 L508.8,771.4 L625.3,698.7 Q689.6,612.9 711.7,565.8 M364.5,805.0 L510.4,775.2 L628.9,703.1 Q692.5,618.5 714.9,567.4 M364.5,805.0 L511.9,779.0 L632.4,707.6 Q695.7,624.7 718.3,569.2 M364.5,805.0 L513.4,782.8 L636.0,712.0 Q699.1,631.3 722.0,571.0" stroke="#090d10" stroke-width="2.0"/>
<path d="M364.5,805.0 L486.0,749.0 L596.0,662.0 Q675.2,585.2 694.4,557.2 M364.5,805.0 L486.8,749.5 L596.9,663.1 Q675.4,585.6 694.7,557.3 M364.5,805.0 L487.7,750.0 L597.7,664.1 Q675.6,585.9 695.0,557.5 M364.5,805.0 L488.5,750.5 L598.5,665.2 Q675.9,586.4 695.3,557.6 M364.5,805.0 L489.4,750.9 L599.4,666.2 Q676.1,586.8 695.6,557.8 M364.5,805.0 L490.2,751.4 L600.2,667.3 Q676.3,587.3 695.9,557.9 M364.5,805.0 L491.1,751.9 L601.1,668.4 Q676.6,587.8 696.2,558.1 M364.5,805.0 L491.9,752.4 L602.0,669.4 Q676.8,588.3 696.6,558.3 M364.5,805.0 L492.8,752.9 L602.8,670.5 Q677.1,588.8 696.9,558.5" stroke="#090d10" stroke-width="1.1"/>
<path d="M587.0,638.5 Q673.7,582.2 692.0,556.0 M588.8,643.2 Q673.7,582.3 692.1,556.0 M590.6,647.9 Q673.9,582.6 692.4,556.2 M592.4,652.6 Q674.2,583.2 692.9,556.4 M594.2,657.3 Q674.6,584.0 693.6,556.8" stroke="#090d10" stroke-width="1.5"/>
</svg>
</div>
</body></html>
